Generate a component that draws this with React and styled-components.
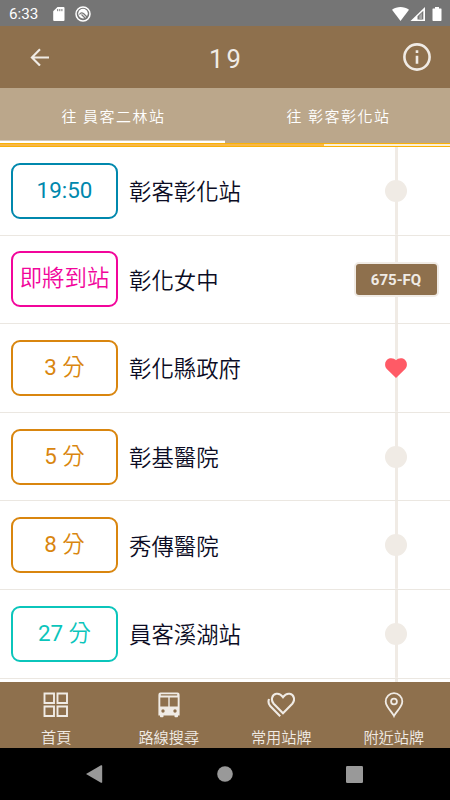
import React from "react";
import styled, { createGlobalStyle } from "styled-components";

const stops = [
  { time: "19:50", name: "彰客彰化站", color: "#0088ad" },
  { label: "即將到站", name: "彰化女中", color: "#f2059b", plate: "675-FQ" },
  { time: "3", label: " 分", name: "彰化縣政府", color: "#d9860f", favorite: true },
  { time: "5", label: " 分", name: "彰基醫院", color: "#d9860f" },
  { time: "8", label: " 分", name: "秀傳醫院", color: "#d9860f" },
  { time: "27", label: " 分", name: "員客溪湖站", color: "#0bc5bb" },
];

const StatusIcons = () => (
  <StatusRight>
    <svg width="17" height="14" viewBox="0 0 17 14">
      <path d="M8.5 14 0 2.7C4.8-.9 12.200-.9 17 2.700Z" fill="#fff" />
    </svg>
    <svg width="15" height="14" viewBox="0 0 15 14">
      <path d="M15 0V14H.5Z" fill="#fff" />
      <path d="M7.500 12.500V9.200L13.300 3.700V12.500Z" fill="#777" />
      <path d="M9.300 12.500V8.800L12 6V12.500Z" fill="#a5a5a5" />
    </svg>
    <svg width="10" height="14" viewBox="0 0 10 14">
      <path d="M3 0H7V1.400H9Q9.500 1.400 9.500 2V13.300Q9.500 14 8.800 14H1.200Q.5 14 .5 13.300V2Q.5 1.400 1 1.400H3Z" fill="#fff" />
    </svg>
  </StatusRight>
);

const HomeIcon = () => (
  <svg width="26" height="26" viewBox="0 0 26 26" fill="none" stroke="currentColor" strokeWidth="1.900">
    <path d="M1.500 1.500H11V11H1.500ZM14.500 1.500H24V11H14.500ZM1.500 14.500H11V24H1.500ZM14.500 14.500H24V24H14.500Z" />
  </svg>
);

const BusIcon = () => (
  <svg width="22" height="26" viewBox="0 0 22 26" fill="currentColor" fillRule="evenodd">
    <path d="M2.500.6H19.500Q21.600.6 21.600 2.800V23.500H20V24.400Q20 25.200 19.200 25.200H17.300Q16.500 25.200 16.500 24.400V23.500H5.500V24.400Q5.500 25.200 4.700 25.200H2.800Q2 25.200 2 24.400V23.500H.4V2.800Q.4.6 2.500.6ZM2.800 2.200V3.600H19.200V2.200ZM2.300 5.500V14.500H10.300V5.500ZM11.700 5.500V14.500H19.700V5.500ZM5 17.300A1.700 1.700 0 1 0 5 20.700 1.700 1.700 0 0 0 5 17.300ZM17 17.300A1.700 1.700 0 1 0 17 20.700 1.700 1.700 0 0 0 17 17.300Z" />
  </svg>
);

const FavoriteIcon = () => (
  <svg width="28" height="26" viewBox="0 0 28 26" fill="none" stroke="currentColor" strokeWidth="2.100">
    <path d="M16 21.300 6.700 11.700C3.400 8 5 2.600 9.300 1.800 12.200 1.300 14.300 2.800 16 5.200 17.700 2.800 19.800 1.300 22.700 1.800 27 2.600 28.600 8 25.300 11.700Z" />
    <path d="M2 7C1 10 1.500 12.200 3.200 14L13.200 24.200" />
  </svg>
);

const PinIcon = () => (
  <svg width="20" height="26" viewBox="0 0 20 26" fill="none" stroke="currentColor" strokeWidth="1.800">
    <path d="M10 24C8 19.500 1.700 15 1.700 9.500A8.300 8.300 0 0 1 18.300 9.500C18.300 15 12 19.500 10 24Z" />
    <circle cx="10" cy="9.500" r="2.900" />
  </svg>
);

const App = () => {
  return (
    <>
      <GlobalStyle />
      <Screen>
        <StatusBar>
          <Clock>6:33</Clock>
          <svg width="12" height="14" viewBox="0 0 12 14">
            <path d="M4.500 0H10.500Q11.500 0 11.500 1V13Q11.500 14 10.500 14H1.200Q.2 14 .2 13V4.300Z" fill="#fff" />
            <path d="M4.700 2V4.200M6.800 2V4.200M8.900 2V4.200" stroke="#777" strokeWidth="1" />
          </svg>
          <AppBadge width="16" height="16" viewBox="0 0 16 16">
            <circle cx="8" cy="8" r="7" fill="none" stroke="#fff" strokeWidth="1.500" />
            <circle cx="8" cy="7.600" r="4.800" fill="#fff" />
            <path d="M4.500 8.500Q6 6 8.500 7.500L12 11M6.500 8.500 10 12" fill="none" stroke="#777" strokeWidth="1.300" />
          </AppBadge>
          <StatusIcons />
        </StatusBar>

        <Header>
          <IconButton aria-label="back">
            <svg width="20" height="18" viewBox="0 0 20 18" fill="none" stroke="currentColor" strokeWidth="2.100">
              <path d="M19 9.500H2.500M10 1.200 1.900 9.500 10 17.600" />
            </svg>
          </IconButton>
          <Title>19</Title>
          <IconButton aria-label="info">
            <svg width="28" height="28" viewBox="0 0 28 28" fill="none" stroke="currentColor" strokeWidth="2.600">
              <circle cx="14" cy="14" r="12.600" />
              <path d="M14 12.700V20.800M14 7.300V10" />
            </svg>
          </IconButton>
        </Header>

        <Tabs>
          <Tab $active>往 員客二林站</Tab>
          <Tab>往 彰客彰化站</Tab>
        </Tabs>
        <Progress>
          <ProgressFill />
        </Progress>

        <StopList>
          {stops.map((stop) => (
            <StopRow key={stop.name}>
              <TimeBox $color={stop.color}>
                {stop.time ? <Digits>{stop.time}</Digits> : null}
                {stop.label}
              </TimeBox>
              <StopName>{stop.name}</StopName>
              <Track>
                {stop.plate ? (
                  <Plate>{stop.plate}</Plate>
                ) : stop.favorite ? (
                  <svg width="22" height="20" viewBox="0 0 22 20">
                    <path d="M11 20 1.800 11C-1.200 7.700-.1 2 4 .5 6.800-.4 9.500.5 11 2.300 12.500.5 15.200-.4 18 .5 22.100 2 23.200 7.700 20.200 11Z" fill="#ff5a66" />
                  </svg>
                ) : (
                  <Dot />
                )}
              </Track>
            </StopRow>
          ))}
          <ListTail />
        </StopList>

        <BottomNav>
          <NavItem><HomeIcon />首頁</NavItem>
          <NavItem><BusIcon />路線搜尋</NavItem>
          <NavItem><FavoriteIcon />常用站牌</NavItem>
          <NavItem><PinIcon />附近站牌</NavItem>
        </BottomNav>

        <SystemBar>
          <svg width="17" height="18" viewBox="0 0 17 18">
            <path d="M0 9 15 .3Q16.200-.2 16.200 1V17Q16.200 18.200 15 17.700Z" fill="#999" />
          </svg>
          <svg width="16" height="16" viewBox="0 0 16 16">
            <circle cx="8" cy="8" r="7.800" fill="#999" />
          </svg>
          <svg width="17" height="17" viewBox="0 0 17 17">
            <rect width="17" height="17" rx="1.200" fill="#999" />
          </svg>
        </SystemBar>
      </Screen>
    </>
  );
};

export default App;

const GlobalStyle = createGlobalStyle`
  * {
    box-sizing: border-box;
  }

  body {
    margin: 0;
    background: #fff;
    font-family: Roboto, "Noto Sans CJK TC", sans-serif;
  }

  svg {
    display: block;
    flex-shrink: 0;
  }
`;

const Screen = styled.div`
  display: flex;
  flex-direction: column;
  width: 450px;
  height: 800px;
  overflow: hidden;
`;

const StatusBar = styled.div`
  display: flex;
  align-items: center;
  height: 26px;
  flex-shrink: 0;
  padding: 1px 8px 0 9px;
  background: #757575;
`;

const Clock = styled.span`
  width: 44px;
  color: #fff;
  font-size: 15.2px;
  line-height: 18px;
`;

const AppBadge = styled.svg`
  margin-left: 10px;
`;

const StatusRight = styled.div`
  display: flex;
  align-items: center;
  gap: 1px;
  margin-left: auto;

  svg:last-child {
    margin-left: 6px;
  }
`;

const Header = styled.header`
  display: grid;
  grid-template-columns: 80px 1fr 66px;
  align-items: center;
  height: 62px;
  flex-shrink: 0;
  background: #8e704d;
  color: #f0ebe5;
`;

const IconButton = styled.button`
  display: flex;
  justify-content: center;
  padding: 0;
  border: 0;
  background: none;
  color: inherit;
`;

const Title = styled.h1`
  margin: 0;
  padding: 3px 11px 0 0;
  font-size: 25.6px;
  font-weight: 400;
  letter-spacing: 3px;
  line-height: 30px;
  text-align: center;
`;

const Tabs = styled.div`
  display: grid;
  grid-template-columns: 1fr 1fr;
  height: 55px;
  flex-shrink: 0;
  background: #bba78b;
`;

const Tab = styled.div`
  display: flex;
  align-items: center;
  justify-content: center;
  padding: 2px 0 0 2px;
  border-bottom: 2px solid ${(props) => (props.$active ? "#fff" : "transparent")};
  box-shadow: ${(props) => (props.$active ? "inset 0 -1px 0 #d3c8b8" : "none")};
  color: #fff;
  font-size: 15px;
  font-weight: 350;
  letter-spacing: 1.5px;
`;

const Progress = styled.div`
  height: 4px;
  flex-shrink: 0;
  border: solid #f9b208;
  border-width: 1px 0;
  background: #fbf0d8;
`;

const ProgressFill = styled.div`
  width: 72%;
  height: 100%;
  background: #f8b748;
`;

const StopList = styled.div`
  flex: 1;
  overflow: hidden;
`;

const StopRow = styled.div`
  display: grid;
  grid-template-columns: 107px 1fr 108px;
  align-items: center;
  height: 88.6px;
  padding-left: 11px;
  border-bottom: 1px solid #ebe7e1;
`;

const TimeBox = styled.div`
  height: 56px;
  padding-top: 12px;
  border: 2px solid ${(props) => props.$color};
  border-radius: 9px;
  color: ${(props) => props.$color};
  font-size: 22.4px;
  font-weight: 350;
  line-height: 26px;
  text-align: center;
  white-space: nowrap;
`;

const Digits = styled.span`
  font-weight: 400;
`;

const StopName = styled.div`
  padding: 3px 0 0 11px;
  color: #0b0c24;
  font-size: 22.4px;
  font-weight: 350;
  line-height: 26px;
`;

const Track = styled.div`
  display: flex;
  align-items: center;
  justify-content: center;
  height: 100%;
  background: linear-gradient(#f0ebe5, #f0ebe5) center / 3px 100% no-repeat;
`;

const Dot = styled.span`
  width: 22px;
  height: 22px;
  border-radius: 50%;
  background: #f0ebe5;
`;

const Plate = styled.span`
  display: flex;
  align-items: center;
  justify-content: center;
  width: 85px;
  height: 35px;
  padding-top: 2px;
  border: 2px solid #f0ebe5;
  border-radius: 5px;
  background: #8e704d;
  color: #f0ebe5;
  font-size: 15px;
  font-weight: 700;
`;

const ListTail = styled(Track)`
  width: 108px;
  height: 5px;
  margin-left: auto;
`;

const BottomNav = styled.nav`
  display: grid;
  grid-template-columns: repeat(4, 1fr);
  height: 66px;
  flex-shrink: 0;
  background: #8e704d;
`;

const NavItem = styled.div`
  display: flex;
  flex-direction: column;
  align-items: center;
  gap: 9px;
  padding-top: 9.5px;
  color: #f0ebe5;
  font-size: 15.2px;
  font-weight: 350;
  line-height: 22px;
`;

const SystemBar = styled.div`
  display: flex;
  align-items: center;
  justify-content: space-between;
  height: 52px;
  flex-shrink: 0;
  padding: 0 87px 0 86px;
  background: #000;
`;
